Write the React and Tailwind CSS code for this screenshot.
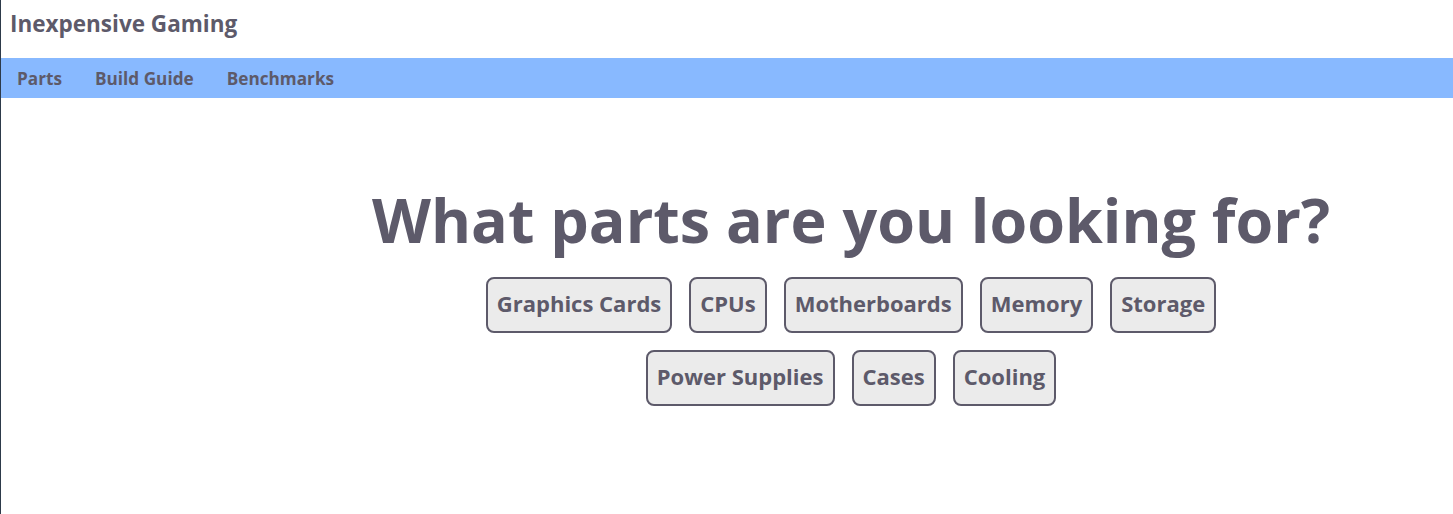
import React from "react";

const row1 = ["Graphics Cards", "CPUs", "Motherboards", "Memory", "Storage"];
const row2 = ["Power Supplies", "Cases", "Cooling"];

function Btn({ label }) {
  return (
    <button className="h-[56px] px-[9px] pb-[4px] border-2 border-[#5d5a6a] rounded-[8px] bg-[#ebebeb] text-[22px] font-bold text-[#5d5a6a] leading-none">
      {label}
    </button>
  );
}

export default function App() {
  return (
    <div
      className="min-h-[514px] bg-white border-l border-[#2d3a4a] text-[#5d5a6a]"
      style={{ fontFamily: '"Open Sans", "Noto Sans", sans-serif' }}
    >
      <div className="h-[58px] flex items-center pl-[9px] pb-[11px]">
        <span className="text-[22.5px] font-bold">Inexpensive Gaming</span>
      </div>
      <nav className="h-[40px] bg-[#88b9ff] flex items-center pl-[16px] gap-[33px] text-[17.2px] font-bold pt-[2px]">
        <span>Parts</span>
        <span>Build Guide</span>
        <span>Benchmarks</span>
      </nav>
      <div className="flex">
        <div className="w-[248px] shrink-0" />
        <div className="flex-1 flex flex-col items-center pt-[91px]">
          <h1 className="text-[61px] font-bold leading-none">What parts are you looking for?</h1>
          <div className="flex gap-[17px] mt-[27px]">
            {row1.map((l) => (
              <Btn key={l} label={l} />
            ))}
          </div>
          <div className="flex gap-[17px] mt-[17px]">
            {row2.map((l) => (
              <Btn key={l} label={l} />
            ))}
          </div>
        </div>
      </div>
    </div>
  );
}
